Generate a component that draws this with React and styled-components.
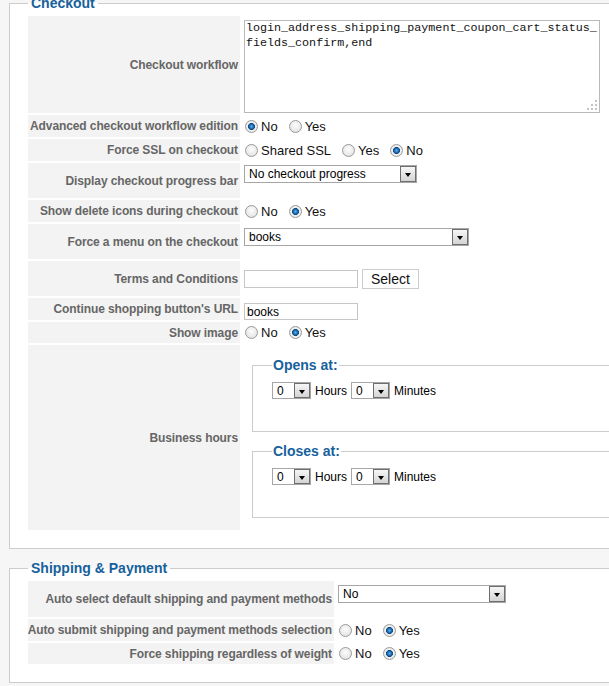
import styled, { createGlobalStyle } from "styled-components";

const GlobalStyle = createGlobalStyle`
  html, body {
    margin: 0;
    overflow: hidden;
    background: #f6f6f6;
  }
  body {
    font-family: "Liberation Sans", Arial, sans-serif;
    color: #111;
  }
`;

function Select({ width, value, height = 18 }) {
  return (
    <SelectBox $w={width} $h={height}>
      <SelectText>{value}</SelectText>
      <SelectArrow />
    </SelectBox>
  );
}

function RadioGroup({ name, options, checked }) {
  return (
    <Radios>
      {options.map((opt) => (
        <RadioOption key={opt}>
          <Radio name={name} defaultChecked={opt === checked} />
          {opt}
        </RadioOption>
      ))}
    </Radios>
  );
}

function FormRow({ label, h, pt, block, children }) {
  return (
    <>
      <Key>{label}</Key>
      <Value $h={h} $pt={pt} $block={block}>
        {children}
      </Value>
    </>
  );
}

function TimePicker() {
  return (
    <TimeRow>
      <Select width={39} height={17} value="0" />
      <Unit>Hours</Unit>
      <Select width={39} height={17} value="0" />
      <Unit>Minutes</Unit>
    </TimeRow>
  );
}

function App() {
  return (
    <Page>
      <GlobalStyle />
      <Fieldset $first>
        <Legend>Checkout</Legend>
        <Table $key={212}>
          <FormRow label="Checkout workflow" h={97} pt={4}>
            <AreaWrap>
              <TextArea
                readOnly
                defaultValue="login_address_shipping_payment_coupon_cart_status_fields_confirm,end"
              />
              <Grip width="10" height="10" viewBox="0 0 10 10">
                <rect x="8" y="0" width="2" height="2" fill="#c4c4c4" />
                <rect x="4" y="4" width="2" height="2" fill="#c4c4c4" />
                <rect x="8" y="4" width="2" height="2" fill="#c4c4c4" />
                <rect x="0" y="8" width="2" height="2" fill="#c4c4c4" />
                <rect x="4" y="8" width="2" height="2" fill="#c4c4c4" />
                <rect x="8" y="8" width="2" height="2" fill="#c4c4c4" />
              </Grip>
            </AreaWrap>
          </FormRow>
          <FormRow label="Advanced checkout workflow edition" h={22}>
            <RadioGroup name="adv" options={["No", "Yes"]} checked="No" />
          </FormRow>
          <FormRow label="Force SSL on checkout" h={22}>
            <RadioGroup name="ssl" options={["Shared SSL", "Yes", "No"]} checked="No" />
          </FormRow>
          <FormRow label="Display checkout progress bar" h={35} pt={2}>
            <Select width={173} value="No checkout progress" />
          </FormRow>
          <FormRow label="Show delete icons during checkout" h={22}>
            <RadioGroup name="del" options={["No", "Yes"]} checked="Yes" />
          </FormRow>
          <FormRow label="Force a menu on the checkout" h={35} pt={4}>
            <Select width={225} value="books" />
          </FormRow>
          <FormRow label="Terms and Conditions" h={35}>
            <TextInput $h={18} readOnly defaultValue="" />
            <Button type="button">Select</Button>
          </FormRow>
          <FormRow label="Continue shopping button's URL" h={22} pt={5}>
            <TextInput $h={17} readOnly defaultValue="books" />
          </FormRow>
          <FormRow label="Show image" h={21}>
            <RadioGroup name="img" options={["No", "Yes"]} checked="Yes" />
          </FormRow>
          <FormRow label="Business hours" h={185} block>
            <SubFieldset>
              <SubLegend>Opens at:</SubLegend>
              <TimePicker />
            </SubFieldset>
            <SubFieldset>
              <SubLegend>Closes at:</SubLegend>
              <TimePicker />
            </SubFieldset>
          </FormRow>
        </Table>
      </Fieldset>

      <Fieldset>
        <Legend>Shipping &amp; Payment</Legend>
        <Table $key={306}>
          <FormRow label="Auto select default shipping and payment methods" h={36} pt={4}>
            <Select width={168} value="No" />
          </FormRow>
          <FormRow label="Auto submit shipping and payment methods selection" h={22}>
            <RadioGroup name="autosub" options={["No", "Yes"]} checked="Yes" />
          </FormRow>
          <FormRow label="Force shipping regardless of weight" h={21}>
            <RadioGroup name="force" options={["No", "Yes"]} checked="Yes" />
          </FormRow>
        </Table>
      </Fieldset>
    </Page>
  );
}
export default App;

const Page = styled.div`
  padding-left: 9px;
  width: 700px;
`;

const Fieldset = styled.fieldset`
  box-sizing: border-box;
  width: 690px;
  min-width: 0;
  margin: ${(p) => (p.$first ? "-5px 0 0" : "11px 0 0")};
  padding: 5px 18px 18px 18px;
  border: 1px solid #cccccc;
  background: #ffffff;
`;

const Legend = styled.legend`
  padding: 0 3px;
  font-size: 14px;
  line-height: 16px;
  font-weight: 700;
  color: #17619c;
`;

const Table = styled.div`
  display: grid;
  grid-template-columns: ${(p) => p.$key}px 1fr;
  column-gap: 4px;
  row-gap: 2px;
`;

const Key = styled.div`
  display: flex;
  align-items: center;
  justify-content: flex-end;
  padding-right: 2px;
  background: #f3f3f3;
  color: #666666;
  font-size: 12px;
  font-weight: 700;
  letter-spacing: -0.1px;
  white-space: nowrap;
`;

const Value = styled.div`
  box-sizing: border-box;
  min-height: ${(p) => p.$h}px;
  display: ${(p) => (p.$block ? "block" : "flex")};
  align-items: ${(p) => (p.$pt !== undefined ? "flex-start" : "center")};
  padding-top: ${(p) => p.$pt || 0}px;
  min-width: 0;
  white-space: nowrap;
`;

const AreaWrap = styled.div`
  position: relative;
  width: 356px;
  height: 93px;
`;

const TextArea = styled.textarea`
  box-sizing: border-box;
  width: 356px;
  height: 93px;
  margin: 0;
  padding: 0 1px;
  border: 1px solid #b9b9b9;
  resize: none;
  overflow: hidden;
  font-family: "Liberation Mono", "Courier New", monospace;
  font-size: 11.7px;
  line-height: 15px;
  color: #111;
  background: #fff;
  outline: none;
`;

const Grip = styled.svg`
  position: absolute;
  right: 3px;
  bottom: 3px;
`;

const Radios = styled.div`
  display: flex;
  align-items: center;
  font-size: 13px;
  color: #111;
`;

const RadioOption = styled.label`
  display: inline-flex;
  align-items: center;
  gap: 3px;
  margin-right: 10px;
`;

const Radio = styled.input.attrs({ type: "radio" })`
  appearance: none;
  box-sizing: border-box;
  width: 13px;
  height: 13px;
  margin: 0 0 0 1px;
  border-radius: 50%;
  border: 1px solid #9a9a9a;
  background: radial-gradient(circle at 50% 40%, #fdfdfd 0, #e6e6e6 70%, #d8d8d8 100%);
  &:checked {
    background: radial-gradient(
      circle at 50% 50%,
      #6ab8f0 0,
      #2478c0 1.6px,
      #0e4c85 3.2px,
      #f2f2f2 3.8px,
      #dcdcdc 100%
    );
  }
`;

const SelectBox = styled.div`
  box-sizing: border-box;
  width: ${(p) => p.$w}px;
  height: ${(p) => p.$h}px;
  display: flex;
  align-items: stretch;
  border: 1px solid #a6a6a6;
  background: #ffffff;
  font-size: 12px;
  color: #000;
`;

const SelectText = styled.span`
  flex: 1;
  padding-left: 4px;
  display: flex;
  align-items: center;
  overflow: hidden;
`;

const SelectArrow = styled.span`
  box-sizing: border-box;
  width: 16px;
  border: 1px solid #6e6e6e;
  background: linear-gradient(#f6f6f6, #d4d4d4);
  display: flex;
  align-items: center;
  justify-content: center;
  &::after {
    content: "";
    margin-top: 2px;
    border-top: 4px solid #000;
    border-left: 3.5px solid transparent;
    border-right: 3.5px solid transparent;
  }
`;

const TextInput = styled.input.attrs({ type: "text" })`
  box-sizing: border-box;
  width: 114px;
  height: ${(p) => p.$h}px;
  margin: 0;
  padding: 0 2px;
  border: 1px solid #c6c6c6;
  font-family: "Liberation Sans", Arial, sans-serif;
  font-size: 12px;
  color: #000;
  outline: none;
`;

const Button = styled.button`
  box-sizing: border-box;
  height: 20px;
  margin-left: 4px;
  padding: 0 8px;
  border: 1px solid #cccccc;
  background: #ffffff;
  font-family: "Liberation Sans", Arial, sans-serif;
  font-size: 14px;
  line-height: 18px;
  color: #111;
`;

const SubFieldset = styled.fieldset`
  min-width: 0;
  margin: 12px 0 0 8px;
  padding: 9px 19px 32px;
  border: 1px solid #cccccc;
  & + & {
    margin-top: 11px;
  }
`;

const SubLegend = styled.legend`
  padding: 0 1px;
  font-size: 14px;
  line-height: 16px;
  font-weight: 700;
  color: #17619c;
`;

const TimeRow = styled.div`
  display: flex;
  align-items: center;
  gap: 4px;
`;

const Unit = styled.span`
  font-size: 12px;
  color: #000;
`;
